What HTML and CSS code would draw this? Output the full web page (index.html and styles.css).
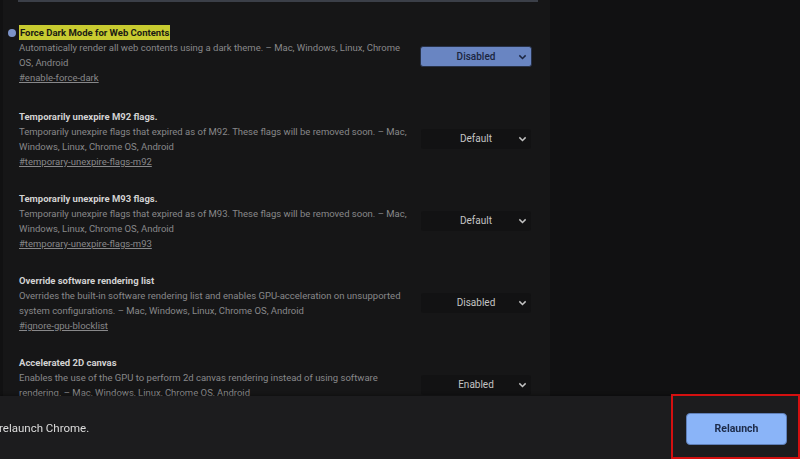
FILE: index.html
```html
<!DOCTYPE html>
<html>
<head>
<meta charset="utf-8">
<link rel="stylesheet" href="styles.css">
</head>
<body>
<div class="panel">
  <div class="topline"></div>
  <div class="flags">
    <div class="flag first">
      <div class="info">
        <div class="title marked"><span class="hl">Force Dark Mode for Web Contents</span></div>
        <div class="desc">Automatically render all web contents using a dark theme. – Mac, Windows, Linux, Chrome OS, Android</div>
        <a class="link">#enable-force-dark</a>
      </div>
      <div class="select active"><span>Disabled</span><svg class="chev" viewBox="0 0 10 6"><path d="M1.5 1.2 5 4.6 8.5 1.2" fill="none" stroke="currentColor" stroke-width="1.6"/></svg></div>
    </div>
    <div class="flag">
      <div class="info">
        <div class="title">Temporarily unexpire M92 flags.</div>
        <div class="desc">Temporarily unexpire flags that expired as of M92. These flags will be removed soon. – Mac, Windows, Linux, Chrome OS, Android</div>
        <a class="link">#temporary-unexpire-flags-m92</a>
      </div>
      <div class="select"><span>Default</span><svg class="chev" viewBox="0 0 10 6"><path d="M1.5 1.2 5 4.6 8.5 1.2" fill="none" stroke="currentColor" stroke-width="1.6"/></svg></div>
    </div>
    <div class="flag">
      <div class="info">
        <div class="title">Temporarily unexpire M93 flags.</div>
        <div class="desc">Temporarily unexpire flags that expired as of M93. These flags will be removed soon. – Mac, Windows, Linux, Chrome OS, Android</div>
        <a class="link">#temporary-unexpire-flags-m93</a>
      </div>
      <div class="select"><span>Default</span><svg class="chev" viewBox="0 0 10 6"><path d="M1.5 1.2 5 4.6 8.5 1.2" fill="none" stroke="currentColor" stroke-width="1.6"/></svg></div>
    </div>
    <div class="flag">
      <div class="info">
        <div class="title">Override software rendering list</div>
        <div class="desc">Overrides the built-in software rendering list and enables GPU-acceleration on unsupported system configurations. – Mac, Windows, Linux, Chrome OS, Android</div>
        <a class="link">#ignore-gpu-blocklist</a>
      </div>
      <div class="select"><span>Disabled</span><svg class="chev" viewBox="0 0 10 6"><path d="M1.5 1.2 5 4.6 8.5 1.2" fill="none" stroke="currentColor" stroke-width="1.6"/></svg></div>
    </div>
    <div class="flag">
      <div class="info">
        <div class="title">Accelerated 2D canvas</div>
        <div class="desc">Enables the use of the GPU to perform 2d canvas rendering instead of using software rendering. – Mac, Windows, Linux, Chrome OS, Android</div>
        <a class="link">#disable-accelerated-2d-canvas</a>
      </div>
      <div class="select"><span>Enabled</span><svg class="chev" viewBox="0 0 10 6"><path d="M1.5 1.2 5 4.6 8.5 1.2" fill="none" stroke="currentColor" stroke-width="1.6"/></svg></div>
    </div>
  </div>
</div>
<div class="bottombar">
  <div class="notice">relaunch Chrome.</div>
  <button class="relaunch">Relaunch</button>
  <div class="annot"></div>
</div>
</body>
</html>
```
FILE: styles.css
```css
* { box-sizing: border-box; }
html, body {
  margin: 0;
  padding: 0;
  width: 800px;
  height: 459px;
  overflow: hidden;
  background: #111112;
  font-family: Roboto, "Liberation Sans", sans-serif;
}
.panel {
  margin-left: 3px;
  width: 547px;
  height: 459px;
  background: #161617;
}
.topline {
  margin: 0 12px 0 15px;
  height: 2px;
  background: #3b3f48;
}
.flags {
  padding: 24px 16px 0 16px;
  display: flex;
  flex-direction: column;
  gap: 22px;
}
.flag {
  display: flex;
  align-items: center;
  justify-content: space-between;
  height: 60px;
}
.flag.first {
  margin-bottom: 2px;
}
.info {
  width: 392px;
  font-size: 9.5px;
  line-height: 14.8px;
  color: #8a8a8b;
}
.title {
  position: relative;
  font-weight: 700;
  color: #d2d2d2;
}
.title.marked::before {
  content: "";
  position: absolute;
  left: -11px;
  top: 3px;
  width: 8px;
  height: 8px;
  border-radius: 50%;
  background: #7c93c8;
}
.hl {
  background: #c8cb30;
  color: #1a1a14;
  padding: 2px 1px;
}
.desc { color: #88888a; }
.link {
  color: #88888a;
  text-decoration: underline;
}
.select {
  position: relative;
  width: 110px;
  height: 20px;
  margin-right: 3px;
  margin-bottom: 3px;
  border-radius: 3px;
  background: #121213;
  color: #c4c4c4;
  font-size: 10px;
  display: flex;
  align-items: center;
  justify-content: center;
}
.select.active {
  width: 112px;
  height: 21px;
  margin-right: 2px;
  margin-bottom: 0;
  background: #6985c2;
  border: 1px solid #273148;
  color: #1b2540;
  font-weight: 500;
}
.chev {
  position: absolute;
  right: 4px;
  top: 7px;
  width: 9px;
  height: 6px;
}
.bottombar {
  position: fixed;
  left: 0;
  bottom: 0;
  width: 800px;
  height: 63px;
  background: #1c1c1e;
  box-shadow: 0 -1px 3px rgba(0,0,0,0.35);
  display: flex;
  align-items: center;
  justify-content: space-between;
  padding: 0 13px 0 0;
}
.notice {
  color: #dcdcdc;
  font-size: 11.5px;
  margin-left: -1px;
  margin-top: 1px;
}
.relaunch {
  width: 101px;
  height: 32px;
  margin-top: 2px;
  border: 1px solid #5f7fb8;
  border-radius: 4px;
  background: #8ab4f8;
  color: #1c2a48;
  font-family: Roboto, "Liberation Sans", sans-serif;
  font-size: 10.5px;
  font-weight: 700;
}
.annot {
  position: absolute;
  left: 671px;
  top: -2px;
  width: 129px;
  height: 65px;
  border: 2px solid #d41010;
}
```
